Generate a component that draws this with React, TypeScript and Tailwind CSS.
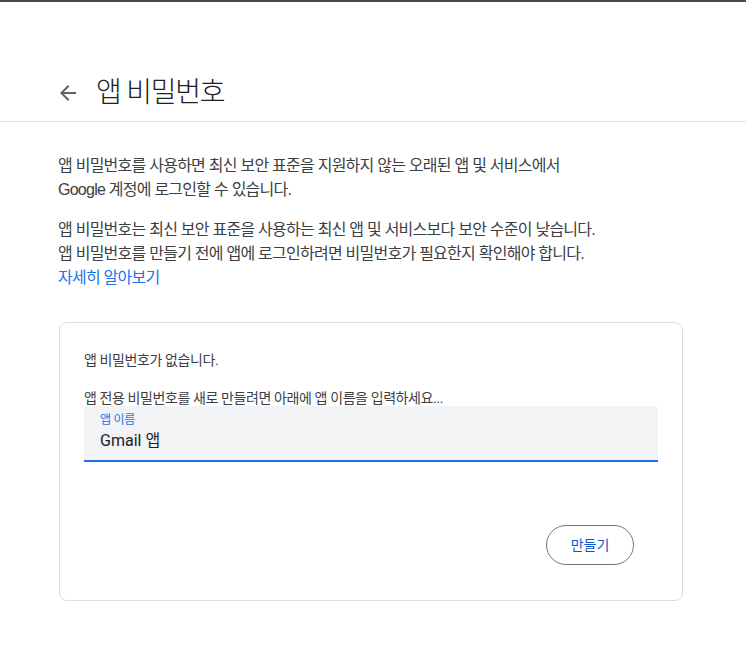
import React from 'react';

const ArrowBack = () => (
    <svg width="24" height="24" viewBox="0 0 24 24" fill="#5f6368">
        <path d="M20 11H7.83l5.59-5.59L12 4l-8 8 8 8 1.41-1.41L7.83 13H20v-2z" />
    </svg>
);

const App = () => {
    return (
        <div className="min-h-screen bg-white border-t-2 border-[#4a4a4a] font-['Roboto','Noto_Sans_CJK_KR',sans-serif] text-[#3c4043]">
            {/* Header */}
            <header className="border-b border-[#e0e0e0] pt-[73px] pb-[10px]">
                <div className="flex items-center pl-[56px]">
                    <button className="w-6 h-6 flex items-center justify-center">
                        <ArrowBack />
                    </button>
                    <h1 className="ml-[16px] text-[28px] leading-9 font-light tracking-[-1.2px] text-[#202124]">앱 비밀번호</h1>
                </div>
            </header>

            <main className="ml-[58px] w-[625px] pt-8">
                <div className="font-['Liberation_Sans','Noto_Sans_CJK_KR',sans-serif] tracking-[-0.75px]">
                    <p className="text-base leading-6 mb-4">
                        앱 비밀번호를 사용하면 최신 보안 표준을 지원하지 않는 오래된 앱 및 서비스에서
                        <br />
                        Google 계정에 로그인할 수 있습니다.
                    </p>
                    <p className="text-base leading-6">
                        앱 비밀번호는 최신 보안 표준을 사용하는 최신 앱 및 서비스보다 보안 수준이 낮습니다.
                        <br />
                        앱 비밀번호를 만들기 전에 앱에 로그인하려면 비밀번호가 필요한지 확인해야 합니다.
                        <br />
                        <a className="text-[#1a73e8]">자세히 알아보기</a>
                    </p>
                </div>

                {/* Card */}
                <section className="mt-[32px] ml-px border border-[#dadce0] rounded-lg px-6 pt-[27px] pb-[35px]">
                    <p className="text-sm leading-5 mb-[18px] tracking-[-0.4px]">앱 비밀번호가 없습니다.</p>
                    <p className="text-sm leading-5 -mb-[2px] tracking-[-0.4px]">앱 전용 비밀번호를 새로 만들려면 아래에 앱 이름을 입력하세요...</p>
                    <div className="bg-[#f1f3f4] rounded-t border-b-2 border-[#1a73e8] h-[56px] px-4 pt-[6px]">
                        <div className="text-xs leading-4 text-[#1a73e8] tracking-[-0.3px]">앱 이름</div>
                        <div className="text-base leading-6 text-[#202124] mt-[1px]">Gmail 앱</div>
                    </div>
                    <div className="flex justify-end mt-[63px] pr-6">
                        <button className="h-10 w-[88px] rounded-full border border-[#747775] text-sm text-[#0b57d0]">
                            만들기
                        </button>
                    </div>
                </section>
            </main>
        </div>
    );
};

export default App;
